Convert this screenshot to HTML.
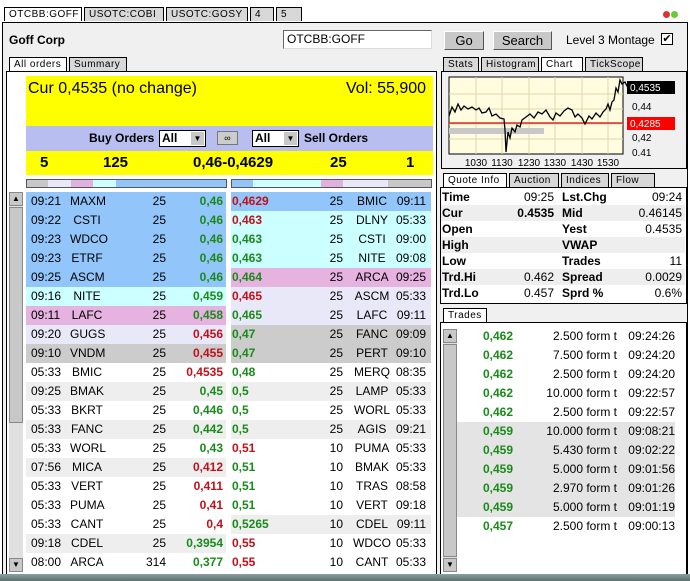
<!DOCTYPE html>
<html><head><meta charset="utf-8"><style>
*{margin:0;padding:0;box-sizing:border-box}
body{width:690px;height:581px;overflow:hidden;background:#fff;font-family:"Liberation Sans",sans-serif;font-size:12px;color:#000;position:relative}
.a{position:absolute}
.tab{position:absolute;height:14px;border:1px solid #000;border-bottom:none;background:#d8d8d8;font-size:10px;letter-spacing:.5px;padding:1px 4px 0 4px;line-height:12px}
.tab.on{background:#fff}
.row{position:absolute;height:19px;line-height:19px;font-size:12px}
.row span{position:absolute}
.g{color:#1a8a1a;font-weight:bold}
.r{color:#c0101a;font-weight:bold}
.btn{position:absolute;background:#c8c8c8;border:1px solid;border-color:#fff #555 #555 #fff;text-align:center;font-size:13px;line-height:17px}
.sb{position:absolute;background:#c8c8c8;border:1px solid #888}
.q{position:absolute;height:16px;line-height:16px;font-size:12px;width:244px;left:441px}
.q span{position:absolute}
.q b{position:absolute}
</style></head><body>
<div class="a" style="left:0;top:0;width:690px;height:22px;background:#fff"></div>
<div class="tab on" style="left:4px;top:7px;width:78px">OTCBB:GOFF</div>
<div class="tab" style="left:84px;top:7px;width:80px">USOTC:COBI</div>
<div class="tab" style="left:166px;top:7px;width:82px">USOTC:GOSY</div>
<div class="tab" style="left:250px;top:7px;width:24px">4</div>
<div class="tab" style="left:276px;top:7px;width:26px">5</div>
<div class="a" style="left:663px;top:11px;width:7px;height:7px;border-radius:50%;background:#d33"></div>
<div class="a" style="left:671px;top:11px;width:7px;height:7px;border-radius:50%;background:#6c3"></div>
<!-- main frame -->
<div class="a" style="left:2px;top:22px;width:686px;height:555px;border:1px solid #000;background:#f0f0f0"></div>
<div class="a" style="left:9px;top:33px;font-weight:bold;font-size:12px">Goff Corp</div>
<div class="a" style="left:283px;top:30px;width:149px;height:19px;background:#fff;border:1px solid;border-color:#666 #ddd #ddd #666;padding-left:3px;line-height:17px;font-size:12px">OTCBB:GOFF</div>
<div class="btn" style="left:444px;top:31px;width:40px;height:19px">Go</div>
<div class="btn" style="left:493px;top:31px;width:59px;height:19px">Search</div>
<div class="a" style="left:566px;top:33px;font-size:12px">Level 3 Montage</div>
<div class="a" style="left:661px;top:33px;width:12px;height:12px;border:1px solid #000;background:#fff;font-size:11px;line-height:10px;text-align:center">✔</div>
<!-- left tabs -->
<div class="tab on" style="left:9px;top:57px;width:58px">All orders</div>
<div class="tab" style="left:69px;top:57px;width:58px">Summary</div>
<div class="a" style="left:6px;top:71px;width:431px;height:504px;border:1px solid #000;background:#fff"></div>
<div class="a" style="left:26px;top:76px;width:407px;height:50px;background:#ffff00"></div>
<div class="a" style="left:28px;top:80px;font-size:16px">Cur 0,4535 (no change)</div>
<div class="a" style="left:346px;top:80px;font-size:16px">Vol: 55,900</div>
<div class="a" style="left:26px;top:126px;width:407px;height:25px;background:#b8bff0"></div>
<div class="a" style="left:89px;top:131px;font-weight:bold;font-size:12px">Buy Orders</div>
<div class="a" style="left:159px;top:130px;width:47px;height:17px;background:#fff;border:1px solid #000;font-weight:bold;padding-left:2px;line-height:15px">All<span style="position:absolute;right:1px;top:1px;width:13px;height:13px;background:#c8c8c8;font-size:8px;text-align:center;line-height:13px">▼</span></div>
<div class="a" style="left:217px;top:131px;width:21px;height:14px;background:#ccc;border:1px solid #777;font-size:9px;text-align:center;line-height:12px">∞</div>
<div class="a" style="left:252px;top:130px;width:47px;height:17px;background:#fff;border:1px solid #000;font-weight:bold;padding-left:2px;line-height:15px">All<span style="position:absolute;right:1px;top:1px;width:13px;height:13px;background:#c8c8c8;font-size:8px;text-align:center;line-height:13px">▼</span></div>
<div class="a" style="left:304px;top:131px;font-weight:bold">Sell Orders</div>
<div class="a" style="left:26px;top:151px;width:407px;height:24px;background:#ffff00;font-weight:bold;font-size:15px"></div>
<div class="a" style="left:40px;top:154px;font-weight:bold;font-size:15px">5</div>
<div class="a" style="left:103px;top:154px;font-weight:bold;font-size:15px">125</div>
<div class="a" style="left:193px;top:154px;font-weight:bold;font-size:15px">0,46-0,4629</div>
<div class="a" style="left:330px;top:154px;font-weight:bold;font-size:15px">25</div>
<div class="a" style="left:406px;top:154px;font-weight:bold;font-size:15px">1</div>
<!-- color bars -->
<div class="a" style="left:26px;top:179px;width:201px;height:9px;border:1px solid #555;display:flex">
<div style="width:21px;background:#c8c8c8"></div><div style="width:23px;background:#e8e8f8"></div><div style="width:22px;background:#e0b0e0"></div><div style="width:23px;background:#ccffff"></div><div style="flex:1;background:#92c5f9"></div></div>
<div class="a" style="left:231px;top:179px;width:201px;height:9px;border:1px solid #555;display:flex">
<div style="width:21px;background:#92c5f9"></div><div style="width:68px;background:#ccffff"></div><div style="width:22px;background:#e0b0e0"></div><div style="width:45px;background:#e8e8f8"></div><div style="flex:1;background:#c8c8c8"></div></div>
<!-- left scrollbar -->
<div class="a" style="left:9px;top:192px;width:14px;height:380px;background:#e0e0e0"></div>
<div class="sb" style="left:9px;top:192px;width:14px;height:14px;font-size:8px;text-align:center;line-height:12px">▲</div>
<div class="sb" style="left:9px;top:207px;width:14px;height:216px"></div>
<div class="sb" style="left:9px;top:558px;width:14px;height:14px;font-size:8px;text-align:center;line-height:12px">▼</div>
<div id="rows"></div>
<!-- right: chart -->
<div class="tab" style="left:443px;top:57px;width:36px">Stats</div>
<div class="tab" style="left:481px;top:57px;width:58px">Histogram</div>
<div class="tab on" style="left:541px;top:57px;width:42px">Chart</div>
<div class="tab" style="left:585px;top:57px;width:58px">TickScope</div>
<div class="a" style="left:441px;top:71px;width:246px;height:98px;border:1px solid #000;background:#f0f0f0"></div>
<svg class="a" style="left:442px;top:72px" width="244" height="96">
<rect x="7" y="5" width="174" height="77" fill="#fffce0" stroke="#000"/>
<g stroke="#ddd8b0"><line x1="34" y1="5" x2="34" y2="82"/><line x1="60" y1="5" x2="60" y2="82"/><line x1="87" y1="5" x2="87" y2="82"/><line x1="113" y1="5" x2="113" y2="82"/><line x1="140" y1="5" x2="140" y2="82"/><line x1="166" y1="5" x2="166" y2="82"/>
<line x1="7" y1="22" x2="181" y2="22"/><line x1="7" y1="37" x2="181" y2="37"/><line x1="7" y1="52" x2="181" y2="52"/><line x1="7" y1="67" x2="181" y2="67"/></g>
<rect x="7" y="56" width="95" height="6" fill="#c8c8c8"/>
<line x1="7" y1="51" x2="181" y2="51" stroke="#d00" stroke-width="1.2"/>
<polyline fill="none" stroke="#000" stroke-width="1.3" points="7,44 10,35 13,40 16,32 19,38 22,34 26,37 30,35 34,38 37,36 40,41 44,40 47,36 50,44 54,42 58,46 62,47 63,58 64,80 66,60 68,66 70,56 73,60 75,53 78,55 80,48 84,45 88,42 92,46 96,40 100,42 104,38 108,45 111,48 114,41 118,44 122,39 126,36 130,38 133,45 136,42 140,46 143,52 147,44 150,47 154,41 158,45 161,40 164,37 166,32 168,38 170,30 172,28 174,16 176,20 178,8 180,12 183,10 186,16 188,15"/>
<rect x="185" y="9" width="48" height="13" fill="#000"/><text x="188" y="19" fill="#fff" font-size="10" font-family="Liberation Sans">0,4535</text>
<text x="190" y="38" font-size="10" font-family="Liberation Sans">0,44</text>
<rect x="185" y="45" width="48" height="13" fill="#f00"/><text x="188" y="55" fill="#fff" font-size="10" font-family="Liberation Sans">0,4285</text>
<text x="190" y="69" font-size="10" font-family="Liberation Sans">0,42</text>
<text x="190" y="84" font-size="10" font-family="Liberation Sans">0.41</text>
<g font-size="10" font-family="Liberation Sans" text-anchor="middle"><text x="34" y="94">1030</text><text x="60" y="94">1130</text><text x="87" y="94">1230</text><text x="113" y="94">1330</text><text x="140" y="94">1430</text><text x="166" y="94">1530</text></g>
</svg>
<!-- quote info -->
<div class="tab on" style="left:443px;top:173px;width:64px">Quote Info</div>
<div class="tab" style="left:509px;top:173px;width:50px">Auction</div>
<div class="tab" style="left:561px;top:173px;width:48px">Indices</div>
<div class="tab" style="left:611px;top:173px;width:44px">Flow</div>
<div class="a" style="left:440px;top:187px;width:247px;height:117px;border:1px solid #000;background:#fff"></div>
<div id="q"></div>
<!-- trades -->
<div class="tab on" style="left:443px;top:308px;width:44px">Trades</div>
<div class="a" style="left:440px;top:322px;width:247px;height:254px;border:1px solid #000;background:#fff"></div>
<div class="a" style="left:443px;top:329px;width:14px;height:243px;background:#e0e0e0"></div>
<div class="sb" style="left:443px;top:329px;width:14px;height:14px;font-size:8px;text-align:center;line-height:12px">▲</div>
<div class="sb" style="left:443px;top:344px;width:14px;height:213px"></div>
<div class="sb" style="left:443px;top:558px;width:14px;height:14px;font-size:8px;text-align:center;line-height:12px">▼</div>
<div id="t"></div>
<div class="a" style="left:0;top:574px;width:690px;height:7px;background:linear-gradient(#8aa0a0,#5d7070)"></div>
<script>
var L=[["09:21","MAXM","25","0,46","g","#92c5f9"],["09:22","CSTI","25","0,46","g","#92c5f9"],["09:23","WDCO","25","0,46","g","#92c5f9"],["09:23","ETRF","25","0,46","g","#92c5f9"],["09:25","ASCM","25","0,46","g","#92c5f9"],["09:16","NITE","25","0,459","g","#ccffff"],["09:11","LAFC","25","0,458","g","#e6b2e0"],["09:20","GUGS","25","0,456","r","#e8e8f8"],["09:10","VNDM","25","0,455","r","#cccccc"],["05:33","BMIC","25","0,4535","r","#fff"],["09:25","BMAK","25","0,45","g","#eee"],["05:33","BKRT","25","0,446","g","#fff"],["05:33","FANC","25","0,442","g","#eee"],["05:33","WORL","25","0,43","g","#fff"],["07:56","MICA","25","0,412","r","#eee"],["05:33","VERT","25","0,411","r","#fff"],["05:33","PUMA","25","0,41","r","#fff"],["05:33","CANT","25","0,4","r","#fff"],["09:18","CDEL","25","0,3954","g","#eee"],["08:00","ARCA","314","0,377","g","#fff"]];
var R=[["0,4629","r","25","BMIC","09:11","#92c5f9"],["0,463","r","25","DLNY","05:33","#ccffff"],["0,463","g","25","CSTI","09:00","#ccffff"],["0,463","g","25","NITE","09:08","#ccffff"],["0,464","g","25","ARCA","09:25","#e6b2e0"],["0,465","r","25","ASCM","05:33","#e8e8f8"],["0,465","g","25","LAFC","09:11","#e8e8f8"],["0,47","g","25","FANC","09:09","#cccccc"],["0,47","g","25","PERT","09:10","#cccccc"],["0,48","g","25","MERQ","08:35","#fff"],["0,5","g","25","LAMP","05:33","#eee"],["0,5","g","25","WORL","05:33","#fff"],["0,5","g","25","AGIS","09:21","#eee"],["0,51","r","10","PUMA","05:33","#fff"],["0,51","g","10","BMAK","05:33","#fff"],["0,51","g","10","TRAS","08:58","#fff"],["0,51","g","10","VERT","09:18","#fff"],["0,5265","g","10","CDEL","09:11","#eee"],["0,55","r","10","WDCO","05:33","#fff"],["0,55","r","10","CANT","05:33","#fff"]];
var h="";
for(var i=0;i<20;i++){var y=192+i*19,a=L[i],b=R[i];
h+='<div class="row" style="left:26px;top:'+y+'px;width:200px;background:'+a[5]+'"><span style="left:5px">'+a[0]+'</span><span style="left:44px;width:34px;text-align:center">'+a[1]+'</span><span style="right:60px">'+a[2]+'</span><span class="'+a[4]+'" style="right:3px">'+a[3]+'</span></div>';
h+='<div class="row" style="left:231px;top:'+y+'px;width:200px;background:'+b[5]+'"><span class="'+b[1]+'" style="left:1px">'+b[0]+'</span><span style="right:88px">'+b[2]+'</span><span style="left:122px;width:38px;text-align:center">'+b[3]+'</span><span style="right:5px">'+b[4]+'</span></div>';}
document.getElementById("rows").innerHTML=h;
var Q=[["Time","09:25","Lst.Chg","09:24",""],["Cur","<b style='position:static'>0.4535</b>","Mid","0.46145","#eee"],[" Open","","Yest","0.4535",""],["High","","VWAP","","#eee"],["Low","","Trades","11",""],["Trd.Hi","0.462","Spread","0.0029","#eee"],["Trd.Lo","0.457","Sprd %","0.6%",""]];
h="";for(i=0;i<7;i++){var q=Q[i];h+='<div class="q" style="top:'+(189+i*16)+'px;background:'+(q[4]||"#fff")+'"><b style="left:1px">'+q[0]+'</b><span style="right:131px">'+q[1]+'</span><b style="left:121px">'+q[2]+'</b><span style="right:3px">'+q[3]+'</span></div>';}
document.getElementById("q").innerHTML=h;
var T=[["0,462","2.500","09:24:26"],["0,462","7.500","09:24:20"],["0,462","2.500","09:24:20"],["0,462","10.000","09:22:57"],["0,462","2.500","09:22:57"],["0,459","10.000","09:08:21"],["0,459","5.430","09:02:22"],["0,459","5.000","09:01:56"],["0,459","2.970","09:01:26"],["0,459","5.000","09:01:19"],["0,457","2.500","09:00:13"]];
h="";for(i=0;i<11;i++){var t=T[i];h+='<div class="row" style="left:457px;top:'+(327+i*19)+'px;width:218px;background:'+(i>=5&&i<=9?"#e4e4e4":"#fff")+'"><span class="g" style="left:26px">'+t[0]+'</span><span style="right:58px">'+t[1]+' form t</span><span style="right:0">'+t[2]+'</span></div>';}
document.getElementById("t").innerHTML=h;
</script>
</body></html>
